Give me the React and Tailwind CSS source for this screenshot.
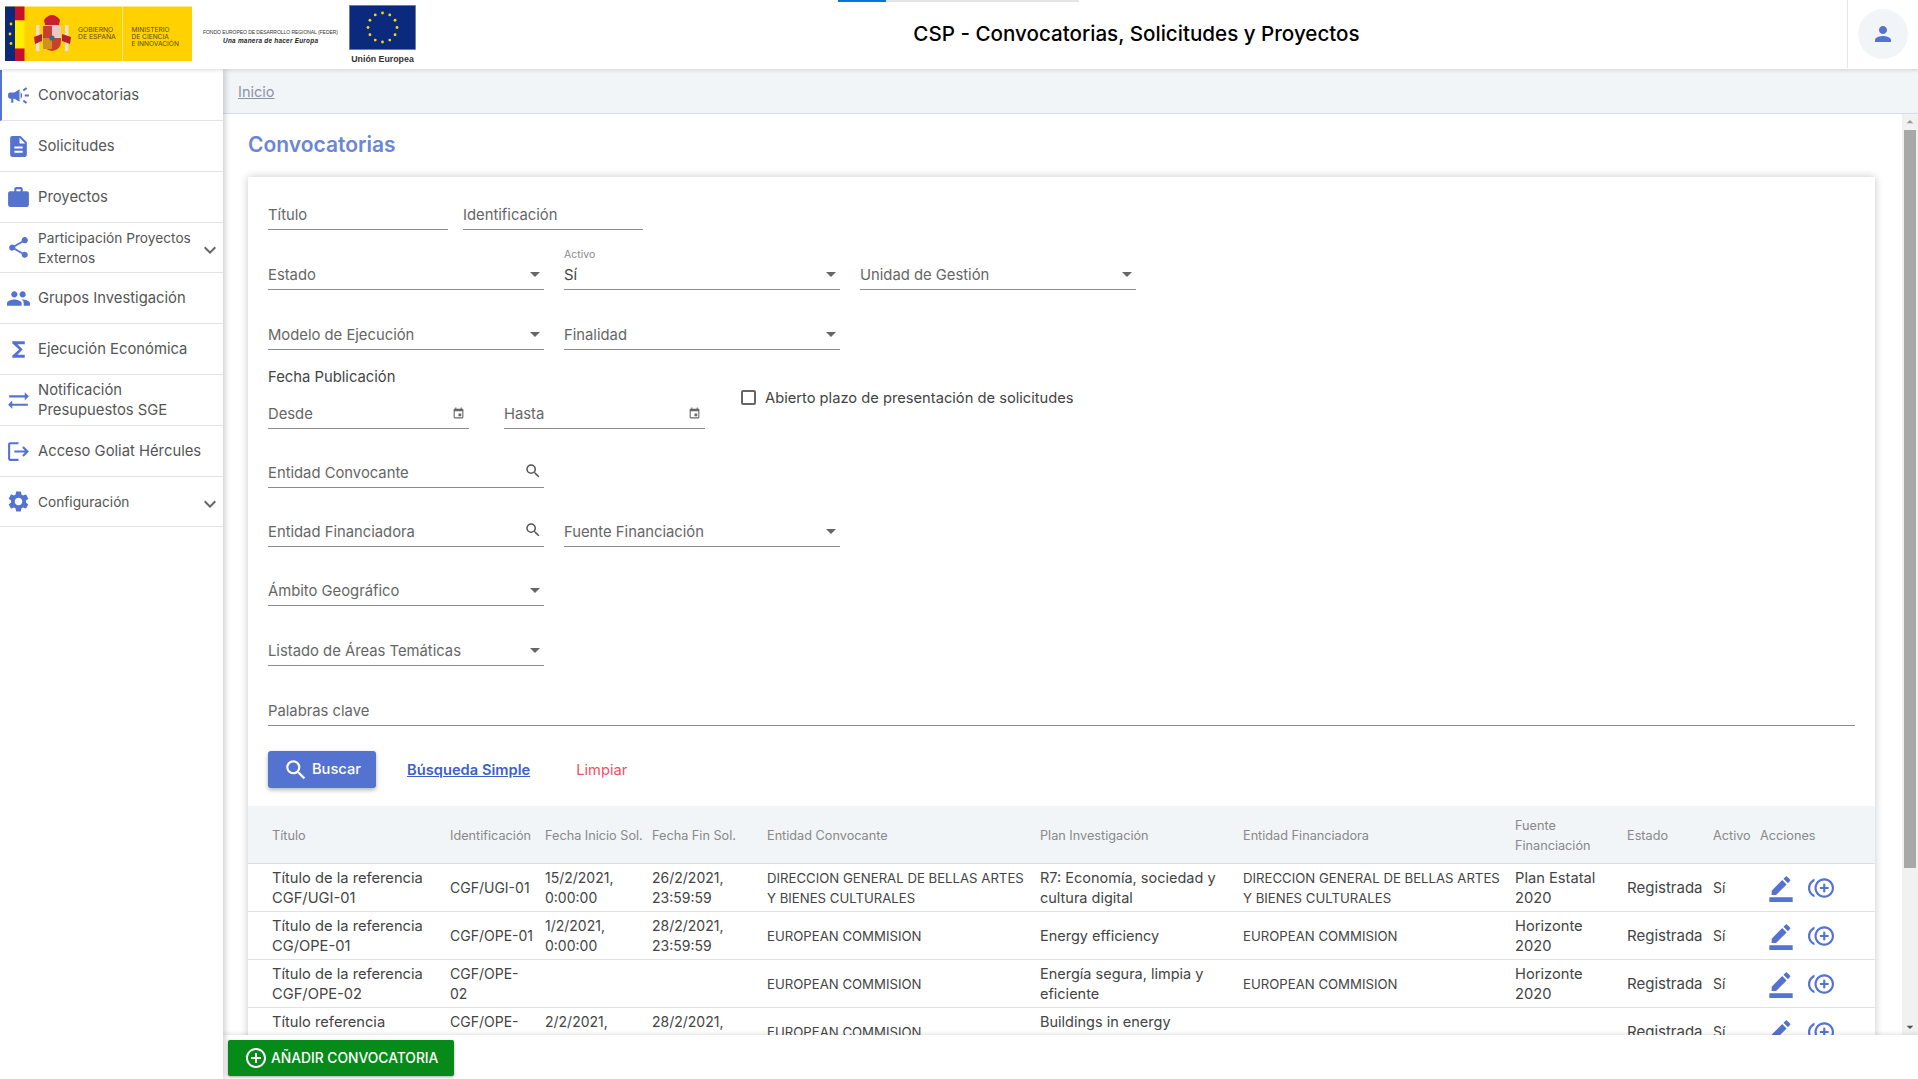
import React from 'react';
import {
    MdCampaign, MdDescription, MdWork, MdShare, MdPeople, MdFunctions, MdSyncAlt, MdLogout, MdSettings,
    MdExpandMore, MdArrowDropDown, MdBorderColor, MdControlPointDuplicate, MdPerson, MdEvent, MdSearch,
    MdAddCircleOutline, MdArrowDropUp,
} from 'react-icons/md';

const NAV = [
    {label: 'Convocatorias', icon: MdCampaign, active: true},
    {label: 'Solicitudes', icon: MdDescription},
    {label: 'Proyectos', icon: MdWork},
    {label: 'Participación Proyectos Externos', icon: MdShare, chevron: true},
    {label: 'Grupos Investigación', icon: MdPeople},
    {label: 'Ejecución Económica', icon: MdFunctions},
    {label: 'Notificación Presupuestos SGE', icon: MdSyncAlt},
    {label: 'Acceso Goliat Hércules', icon: MdLogout},
    {label: 'Configuración', icon: MdSettings, chevron: true},
];

const COLS = [202, 95, 107, 115, 273, 203, 272, 112, 86, 47, 115];
const HEAD = ['Título', 'Identificación', 'Fecha Inicio Sol.', 'Fecha Fin Sol.', 'Entidad Convocante', 'Plan Investigación', 'Entidad Financiadora', 'Fuente Financiación', 'Estado', 'Activo', 'Acciones'];
// text size per column, the uppercase and digit columns run narrower than the rest
const CELL = ['text-[14.7px]', 'text-[14px]', 'text-[14px]', 'text-[14px]', 'text-[13.2px]', 'text-[14.5px]', 'text-[13.2px]', 'text-[14.7px]'];
const ROWS = [
    ['Título de la referencia CGF/UGI-01', 'CGF/UGI-01', '15/2/2021, 0:00:00', '26/2/2021, 23:59:59', 'DIRECCION GENERAL DE BELLAS ARTES Y BIENES CULTURALES', 'R7: Economía, sociedad y cultura digital', 'DIRECCION GENERAL DE BELLAS ARTES Y BIENES CULTURALES', 'Plan Estatal 2020'],
    ['Título de la referencia CG/OPE-01', 'CGF/OPE-01', '1/2/2021, 0:00:00', '28/2/2021, 23:59:59', 'EUROPEAN COMMISION', 'Energy efficiency', 'EUROPEAN COMMISION', 'Horizonte 2020'],
    ['Título de la referencia CGF/OPE-02', 'CGF/OPE-\n02', '', '', 'EUROPEAN COMMISION', 'Energía segura, limpia y eficiente', 'EUROPEAN COMMISION', 'Horizonte 2020'],
    ['Título referencia CGF/OPE-03', 'CGF/OPE-\n03', '2/2/2021, 0:00:00', '28/2/2021, 23:59:59', 'EUROPEAN COMMISION', 'Buildings in energy efficiency', '', ''],
];

function Logos() {
    const stars = Array.from({length: 12}, (_, i) => {
        const a = (i * Math.PI) / 6;
        return [382.5 + 14.5 * Math.sin(a), 27.5 - 14.5 * Math.cos(a)];
    });
    return (
        <svg width="426" height="69" viewBox="0 0 426 69" className="shrink-0">
            <rect x="5" y="6.5" width="187" height="54.5" fill="#ffd100"/>
            <rect x="5" y="6.5" width="10" height="54.5" fill="#0a2a78"/>
            <rect x="15" y="6.5" width="9.5" height="14" fill="#c8102e"/>
            <rect x="15" y="20.5" width="9.5" height="28" fill="#ffee00"/>
            <rect x="15" y="48.5" width="9.5" height="12.5" fill="#c8102e"/>
            <circle cx="11" cy="24" r="1.4" fill="#ffd100"/>
            <circle cx="10" cy="34" r="1.4" fill="#ffd100"/>
            <circle cx="11" cy="43.5" r="1.4" fill="#ffd100"/>
            <rect x="122" y="6.5" width="1" height="54.5" fill="#ffe680"/>
            <path d="M44 20 q8 -10 16 0 l-1 5 h-14z" fill="#c8202e"/>
            <rect x="36" y="25" width="3.5" height="26" fill="#e8e0d0"/>
            <rect x="65" y="25" width="3.5" height="26" fill="#e8e0d0"/>
            <path d="M34 37 l8 -3 v7 l-7 3z M71 37 l-9 -3 v7 l8 3z" fill="#b8202e"/>
            <path d="M43 26 h18 v15 q0 9 -9 10 q-9 -1 -9 -10z" fill="#c8402e"/>
            <rect x="52" y="26" width="9" height="12" fill="#e8c8c8"/>
            <rect x="43" y="38" width="9" height="11" fill="#d09020"/>
            <circle cx="52" cy="38" r="2.6" fill="#3a6a8a"/>
            <text x="78" y="31.5" fontFamily="Inter, sans-serif" fontSize="6.8" fill="#5a4a10">GOBIERNO</text>
            <text x="78" y="38.5" fontFamily="Inter, sans-serif" fontSize="6.8" fill="#5a4a10">DE ESPAÑA</text>
            <text x="131.5" y="31.5" fontFamily="Inter, sans-serif" fontSize="6.6" fill="#5a4a10">MINISTERIO</text>
            <text x="131.5" y="38.5" fontFamily="Inter, sans-serif" fontSize="6.6" fill="#5a4a10">DE CIENCIA</text>
            <text x="131.5" y="45.5" fontFamily="Inter, sans-serif" fontSize="6.6" fill="#5a4a10">E INNOVACIÓN</text>
            <text x="203" y="34" fontFamily="Liberation Sans, sans-serif" fontSize="5" fill="#333" textLength="135">FONDO EUROPEO DE DESARROLLO REGIONAL (FEDER)</text>
            <text x="223" y="42.5" fontFamily="Liberation Sans, sans-serif" fontSize="6.4" fontWeight="700" fontStyle="italic" fill="#222" textLength="95">Una manera de hacer Europa</text>
            <rect x="349.5" y="5.5" width="66" height="44" fill="#0b2a7d" stroke="#5a6f9f" strokeWidth="0.6"/>
            {stars.map(([x, y], i) => <circle key={i} cx={x} cy={y} r="1.4" fill="#f5d90a"/>)}
            <text x="382.5" y="62" textAnchor="middle" fontFamily="Liberation Sans, sans-serif" fontSize="8.8" fontWeight="700" fill="#333">Unión Europea</text>
            <rect x="426" y="0" width="1" height="68" fill="#e5e7eb"/>
        </svg>
    );
}

function NavItem({item}) {
    const Icon = item.icon;
    return (
        <div className={`${item.chevron ? 'h-[50px]' : 'h-[51px]'} shrink-0 flex items-center border-b border-[#e3e3e3] ${item.active ? 'border-l-2 border-l-[#5472d0] pl-[6px]' : 'pl-2'}`}>
            <Icon className="w-[25px] h-[25px] text-[#5472d0] shrink-0 -ml-[2px]"/>
            <span className={`ml-[7px] flex-1 leading-[20px] text-[#555] ${item.chevron ? 'text-[13.7px]' : 'pr-2 text-[14.8px]'}`}>{item.label}</span>
            {item.chevron && <MdExpandMore className="w-[24px] h-[24px] text-[#666] mt-[4px] mr-[1px] shrink-0"/>}
        </div>
    );
}

function Field({label, w, icon, float, value, className = ''}) {
    return (
        <div className={`relative h-[30px] flex items-center border-b border-[#8c8c8c] text-[14.8px] shrink-0 ${w} ${className}`}>
            {float && <span className="absolute left-0 -top-[13px] text-[10.5px] text-[#8a8a8a]">{float}</span>}
            <span className={`flex-1 pt-[1px] ${value ? 'text-[#444]' : 'text-[#666]'}`}>{value || label}</span>
            {icon === 'select' && <MdArrowDropDown className="w-[24px] h-[24px] text-[#666] -mr-[3px] -mt-[1px]"/>}
            {icon === 'date' && <MdEvent className="w-[13px] h-[13px] text-[#666] mr-[4px]"/>}
            {icon === 'search' && <MdSearch className="w-[18px] h-[18px] text-[#555] -mt-[3px] mr-[2px]"/>}
        </div>
    );
}

function SearchForm() {
    return (
        <div className="flex flex-col px-5 pt-[23px]">
            <div className="flex gap-[15px]">
                <Field label="Título" w="w-[180px]"/>
                <Field label="Identificación" w="w-[180px]"/>
            </div>
            <div className="flex gap-5 mt-[30px]">
                <Field label="Estado" w="w-[276px]" icon="select"/>
                <Field float="Activo" value="Sí" w="w-[276px]" icon="select"/>
                <Field label="Unidad de Gestión" w="w-[276px]" icon="select"/>
            </div>
            <div className="flex gap-5 mt-[30px]">
                <Field label="Modelo de Ejecución" w="w-[276px]" icon="select"/>
                <Field label="Finalidad" w="w-[276px]" icon="select"/>
            </div>
            <div className="flex items-center mt-[16px]">
                <div className="w-[437px]">
                    <div className="h-[22px] leading-[22px] text-[14.8px] text-[#444] mb-[11px]">Fecha Publicación</div>
                    <div className="flex gap-[35px]">
                        <Field label="Desde" w="w-[201px]" icon="date"/>
                        <Field label="Hasta" w="w-[201px]" icon="date"/>
                    </div>
                </div>
                <span className="w-[15px] h-[15px] ml-[36px] border-2 border-[#666] rounded-[2px]"/>
                <span className="ml-[9px] pt-[1px] text-[14.7px] text-[#444]">Abierto plazo de presentación de solicitudes</span>
            </div>
            <Field label="Entidad Convocante" w="w-[276px]" icon="search" className="mt-[29px]"/>
            <div className="flex gap-5 mt-[29px]">
                <Field label="Entidad Financiadora" w="w-[276px]" icon="search"/>
                <Field label="Fuente Financiación" w="w-[276px]" icon="select"/>
            </div>
            <Field label="Ámbito Geográfico" w="w-[276px]" icon="select" className="mt-[29px]"/>
            <Field label="Listado de Áreas Temáticas" w="w-[276px]" icon="select" className="mt-[30px]"/>
            <Field label="Palabras clave" w="w-full" className="mt-[30px]"/>
            <div className="flex items-center mt-[25px] text-[14.7px]">
                <button className="w-[108px] h-[37px] flex items-center justify-center gap-[3px] rounded-[3px] bg-[#5472d0] text-white font-medium shadow-[0_2px_4px_rgba(0,0,0,0.3)]">
                    <MdSearch className="w-[26px] h-[26px]"/>
                    Buscar
                </button>
                <a className="ml-[31px] pt-[1px] font-semibold text-[#3f5fc8] underline">Búsqueda Simple</a>
                <a className="ml-[46px] pt-[1px] text-[#f0525f]">Limpiar</a>
            </div>
        </div>
    );
}

function ResultsTable() {
    return (
        <table className="w-full table-fixed border-collapse mt-[18px] leading-[20px] text-[#444]">
            <colgroup>
                {COLS.map((w, i) => <col key={i} style={{width: w}}/>)}
            </colgroup>
            <thead>
            <tr className="h-[57px] bg-[#f2f5f8] border-b border-[#d9dde1] text-[#888]">
                {HEAD.map((h, i) => (
                    <th key={h} className={`font-normal text-left text-[12.7px] pt-[3px] ${i === 0 ? 'pl-6 pr-2' : 'pr-2'}`}>{h}</th>
                ))}
            </tr>
            </thead>
            <tbody>
            {ROWS.map((r, idx) => (
                <tr key={idx} className="h-[48px] border-b border-[#dfe2e5]">
                    {r.map((c, i) => (
                        <td key={i} className={`align-middle pt-[1px] whitespace-pre-line ${CELL[i]} ${i === 0 ? 'pl-6 pr-2' : 'pr-2'}`}>{c}</td>
                    ))}
                    <td className="text-[15px] pt-[1px]">Registrada</td>
                    <td className="text-[14px] pt-[1px]">Sí</td>
                    <td>
                        <div className="flex items-center gap-[13px] pl-[7px] pt-[2px] text-[#5472d0]">
                            <MdBorderColor className="w-[28px] h-[28px]"/>
                            <MdControlPointDuplicate className="w-[26px] h-[26px]"/>
                        </div>
                    </td>
                </tr>
            ))}
            </tbody>
        </table>
    );
}

export default function App() {
    return (
        <div className="relative h-screen flex flex-col overflow-hidden bg-white font-['Inter',sans-serif]">
            <div className="absolute top-0 left-[838px] w-[241px] h-[2px] bg-[#e5e5e5] z-30">
                <div className="w-[48px] h-[2px] bg-[#0078d4]"/>
            </div>
            <header className="relative z-20 h-[69px] shrink-0 flex items-center bg-white shadow-[0_1px_4px_rgba(0,0,0,0.15)]">
                <Logos/>
                <h1 className="flex-1 text-center text-[20.6px] font-medium text-black">CSP - Convocatorias, Solicitudes y Proyectos</h1>
                <div className="w-[71px] h-[68px] self-start border-l border-[#e5e7eb] flex items-center justify-center">
                    <div className="w-[50px] h-[50px] rounded-full bg-[#f2f5f8] flex items-center justify-center">
                        <MdPerson className="w-[24px] h-[24px] text-[#5472d0]"/>
                    </div>
                </div>
            </header>
            <div className="flex-1 min-h-0 flex">
                <nav className="relative z-10 w-[223px] shrink-0 flex flex-col pt-[1px] bg-white shadow-[2px_0_6px_rgba(0,0,0,0.2)]">
                    {NAV.map((item) => <NavItem key={item.label} item={item}/>)}
                </nav>
                <div className="flex-1 min-w-0 flex flex-col">
                    <div className="h-[45px] shrink-0 flex items-center pl-[15px] pt-[1px] bg-[#f2f5f8] border-b border-[#d9dde1] text-[14.5px] text-[#8a93a6]">
                        <a className="underline">Inicio</a>
                    </div>
                    <div className="flex-1 min-h-0 flex">
                        <main className="flex-1 min-w-0 overflow-hidden pl-[25px] pr-[27px]">
                            <h2 className="h-[63px] pb-[1px] flex items-center text-[21px] font-semibold text-[#6b86d8]">Convocatorias</h2>
                            <section className="bg-white shadow-[0_0_8px_rgba(0,0,0,0.22)]">
                                <SearchForm/>
                                <ResultsTable/>
                            </section>
                        </main>
                        <div className="w-[16px] shrink-0 flex flex-col items-center bg-[#f1f1f1]">
                            <MdArrowDropUp className="w-[16px] h-[16px] text-[#999] shrink-0"/>
                            <div className="w-[12px] h-[738px] shrink-0 bg-[#a8a8a8]"/>
                            <div className="flex-1"/>
                            <MdArrowDropDown className="w-[16px] h-[16px] text-[#505050] shrink-0"/>
                        </div>
                    </div>
                    <footer className="relative h-[44px] shrink-0 bg-white pl-[5px] pt-[5px] shadow-[0_-1px_4px_rgba(0,0,0,0.12)]">
                        <button className="w-[226px] h-[36px] flex items-center pl-[16px] gap-[3px] rounded-[2px] bg-[#068a1a] text-white text-[13.8px] font-medium shadow-[0_1px_3px_rgba(0,0,0,0.35)]">
                            <MdAddCircleOutline className="w-[24px] h-[24px] shrink-0"/>
                            AÑADIR CONVOCATORIA
                        </button>
                    </footer>
                </div>
            </div>
        </div>
    );
}
